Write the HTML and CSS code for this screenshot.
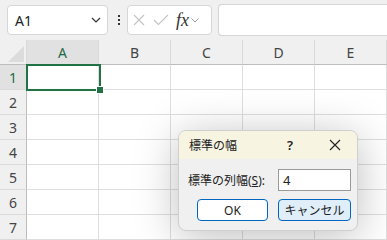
FILE: index.html
```html
<!DOCTYPE html>
<html lang="ja">
<head>
    <meta charset="UTF-8">
    <title>標準の幅</title>
    <link rel="stylesheet" href="styles.css">
</head>
<body>
    <div class="app">
        <div class="formula-bar">
            <div class="name-box">
                <span>A1</span>
                <svg class="chev" width="10" height="6" viewBox="0 0 10 6"><path d="M1 1l4 4 4-4" fill="none" stroke="#333" stroke-width="1.2"/></svg>
            </div>
            <div class="dots"><i></i><i></i><i></i></div>
            <div class="fx-box">
                <svg width="14" height="14" viewBox="0 0 14 14"><path d="M2 2l10 10M12 2L2 12" stroke="#c4c4c4" stroke-width="1.1"/></svg>
                <svg width="16" height="14" viewBox="0 0 16 14"><path d="M1 7l4.5 4.5L15 2" fill="none" stroke="#c4c4c4" stroke-width="1.1"/></svg>
                <span class="fx">fx</span>
                <svg width="8" height="5" viewBox="0 0 8 5"><path d="M.5.5L4 4 7.5.5" fill="none" stroke="#999" stroke-width="1"/></svg>
            </div>
            <div class="formula-input"></div>
        </div>

        <div class="sheet">
            <div class="corner"><span class="tri"></span></div>
            <div class="col-head active">A</div>
            <div class="col-head">B</div>
            <div class="col-head">C</div>
            <div class="col-head">D</div>
            <div class="col-head">E</div>
        </div>

        <div class="dialog">
            <div class="dialog-title">
                <span class="title-text">標準の幅</span>
                <span class="help">?</span>
                <svg class="close" width="12" height="12" viewBox="0 0 12 12"><path d="M1 1l10 10M11 1L1 11" stroke="#222" stroke-width="1.1"/></svg>
            </div>
            <div class="dialog-body">
                <div class="field">
                    <label>標準の列幅(<u>S</u>):</label>
                    <div class="text-input">4</div>
                </div>
                <div class="buttons">
                    <button class="btn">OK</button>
                    <button class="btn focused">キャンセル</button>
                </div>
            </div>
        </div>
        <div class="selection"><span class="handle"></span></div>
    </div>
    <script>
        // 行を作る
        const sheet = document.querySelector('.sheet');
        for (let r = 1; r <= 7; r++) {
            const h = document.createElement('div');
            h.className = 'row-head' + (r === 1 ? ' active' : '');
            h.textContent = r;
            sheet.appendChild(h);
            for (let c = 0; c < 5; c++) {
                const cell = document.createElement('div');
                cell.className = 'cell';
                sheet.appendChild(cell);
            }
        }
    </script>
</body>
</html>
```

FILE: styles.css
```css
body {
    margin: 0;
    font-family: "Segoe UI", "Noto Sans", "Noto Sans CJK JP", sans-serif;
    background: #f0f0f0;
    color: #222;
    overflow: hidden;
}
.app {
    position: relative;
    width: 387px;
    height: 240px;
    overflow: hidden;
}
.formula-bar {
    display: flex;
    align-items: center;
    height: 40px;
    padding: 0 0 0 7px;
    box-sizing: border-box;
}
.name-box {
    display: flex;
    align-items: center;
    justify-content: space-between;
    width: 101px;
    height: 30px;
    box-sizing: border-box;
    background: #fff;
    border: 1px solid #d6d6d6;
    border-radius: 4px;
    padding: 0 6px 0 7px;
    font-size: 14px;
    color: #222;
}
.dots {
    display: flex;
    flex-direction: column;
    gap: 2px;
    margin: 0 7px 0 10px;
}
.dots i {
    width: 2px;
    height: 2px;
    background: #333;
}
.fx-box {
    display: flex;
    align-items: center;
    gap: 7px;
    width: 85px;
    height: 30px;
    box-sizing: border-box;
    background: #fff;
    border: 1px solid #d6d6d6;
    border-radius: 4px;
    padding: 0 4px 0 4px;
}
.fx {
    font-family: "Liberation Serif", serif;
    font-style: italic;
    font-size: 18px;
    color: #333;
    margin-right: -5px;
}
.formula-input {
    flex: 1;
    height: 30px;
    margin-left: 6px;
    background: #fff;
    border: 1px solid #d6d6d6;
    border-right: none;
    border-radius: 4px 0 0 4px;
}
.sheet {
    display: grid;
    grid-template-columns: 27px repeat(5, 72px);
    grid-template-rows: 25px repeat(7, 25px);
    background: #fff;
}
.corner {
    position: relative;
    background: #f0f0f0;
    border-right: 1px solid #d9d9d9;
    border-bottom: 1px solid #bdbdbd;
}
.tri {
    position: absolute;
    right: 2px;
    bottom: 2px;
    width: 0;
    height: 0;
    border-left: 16px solid transparent;
    border-bottom: 16px solid #dcdcdc;
}
.col-head {
    display: flex;
    align-items: center;
    justify-content: center;
    background: #f0f0f0;
    border-right: 1px solid #d9d9d9;
    border-bottom: 1px solid #bdbdbd;
    font-size: 14px;
    color: #444;
}
.row-head {
    display: flex;
    align-items: center;
    justify-content: center;
    background: #f0f0f0;
    border-right: 1px solid #bdbdbd;
    border-bottom: 1px solid #dadada;
    font-size: 14px;
    color: #444;
}
.col-head.active,
.row-head.active {
    background: #e1e1e1;
    color: #1f6b47;
}
.cell {
    border-right: 1px solid #dedede;
    border-bottom: 1px solid #dedede;
}
.selection {
    position: absolute;
    left: 26px;
    top: 64px;
    width: 71px;
    height: 23px;
    border: 2px solid #217346;
}
.handle {
    position: absolute;
    right: -5px;
    bottom: -5px;
    width: 6px;
    height: 6px;
    background: #217346;
    border: 1px solid #fff;
}
.dialog {
    position: absolute;
    left: 178px;
    top: 130px;
    width: 180px;
    height: 101px;
    box-sizing: border-box;
    border: 1px solid #cfcfcf;
    border-radius: 8px;
    background: #f0f0f0;
    box-shadow: 0 6px 44px rgba(0, 0, 0, 0.26);
    overflow: hidden;
    font-size: 12px;
}
.dialog-title {
    display: flex;
    align-items: center;
    height: 28px;
    background: #f7f4e2;
    padding: 0 0 0 10px;
}
.title-text {
    flex: 1;
}
.help {
    width: 20px;
    font-size: 13px;
    font-weight: 600;
    margin-right: 22px;
}
.close {
    margin-right: 16px;
}
.dialog-body {
    padding: 10px 6px 0 9px;
}
.field {
    display: flex;
    align-items: center;
    justify-content: space-between;
}
.text-input {
    width: 73px;
    height: 22px;
    box-sizing: border-box;
    background: #fff;
    border: 1px solid #9a9a9a;
    padding: 0 4px;
    font-size: 13px;
    line-height: 20px;
}
.buttons {
    display: flex;
    justify-content: space-between;
    padding-left: 9px;
    margin-top: 8px;
}
.btn {
    height: 22px;
    box-sizing: border-box;
    font-family: inherit;
    font-size: 12px;
    color: #222;
    background: #fff;
    border: 1px solid #0067c0;
    border-radius: 4px;
    width: 71px;
    padding: 0;
}
.btn.focused {
    width: 73px;
    background: #e0eef9;
}
```
